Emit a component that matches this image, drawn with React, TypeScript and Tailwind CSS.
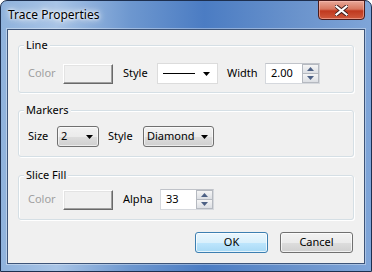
import React from "react";

const font = { fontFamily: '"Segoe UI", "Noto Sans", sans-serif' };

function ColorButton() {
  return (
    <div className="w-[50px] h-[20px] bg-[#f0f0f0] border border-t-[#ffffff] border-l-[#ffffff] border-r-[#696969] border-b-[#696969] shadow-[inset_-1px_-1px_0_#a0a0a0,inset_1px_1px_0_#e3e3e3]" />
  );
}

function Arrow() {
  return (
    <svg width="7" height="4" viewBox="0 0 7 4" className="shrink-0">
      <path d="M0 0 H7 L3.5 4 Z" fill="#000" />
    </svg>
  );
}

function Spin({ value, width }: { value: string; width: string }) {
  return (
    <div className={`${width} h-[21px] bg-white border border-[#d5d8dd] border-t-[#c0c3c9] flex items-stretch`}>
      <div className="flex-1 pl-[5px] flex items-center text-[11px] text-black">{value}</div>
      <div className="w-[17px] flex flex-col bg-[#f0f0f0]">
        <div className="flex-1 flex items-center justify-center border border-[#b5b9c0] bg-[linear-gradient(#f5f5f5,#dcdfe4)]">
          <svg width="7" height="4" viewBox="0 0 7 4"><path d="M0 4 H7 L3.5 0 Z" fill="#4d6185" /></svg>
        </div>
        <div className="flex-1 flex items-center justify-center border border-t-0 border-[#b5b9c0] bg-[linear-gradient(#f5f5f5,#dcdfe4)]">
          <svg width="7" height="4" viewBox="0 0 7 4"><path d="M0 0 H7 L3.5 4 Z" fill="#4d6185" /></svg>
        </div>
      </div>
    </div>
  );
}

function ButtonCombo({ value, width }: { value: string; width: string }) {
  return (
    <div className={`${width} h-[21px] rounded-[3px] border border-[#707070] bg-[linear-gradient(#f2f2f2_0%,#ebebeb_50%,#dddddd_51%,#cfcfcf_100%)] flex items-center justify-between pl-[3px] pr-[5px] text-[11px] text-black shadow-[inset_0_0_0_1px_rgba(255,255,255,0.6)]`}>
      <span>{value}</span>
      <Arrow />
    </div>
  );
}

function Group({ title, height, pt, children }: { title: string; height: string; pt: string; children: React.ReactNode }) {
  return (
    <div className={`relative ${height} ${pt} mx-[10px] border border-[#d5dfe5] rounded-[3px] shadow-[inset_1px_1px_0_#ffffff,1px_1px_0_#ffffff]`}>
      <span className="absolute -top-[9px] left-[5px] px-[2px] bg-[#f0f0f0] text-[11px] leading-[16px] text-black">{title}</span>
      {children}
    </div>
  );
}

export default function App() {
  return (
    <div className="w-[372px] h-[272px] bg-white" style={font}>
      <div className="w-[372px] h-[272px] rounded-t-[7px] border border-[#1d2f4f] bg-[linear-gradient(to_right,#8fb2dc_0%,#a8c4e6_15%,#6d97cf_35%,#4b7cc3_55%,#6a93cc_80%,#7fa5d8_100%)] flex flex-col">
        <div className="h-[28px] flex items-start relative">
          <div className="pl-[7px] pt-[6px] text-[12px] leading-[16px] text-black [text-shadow:0_0_6px_#ffffff,0_0_3px_#ffffff,0_0_8px_#ffffff]">Trace Properties</div>
          <div className="ml-auto mr-[6px] w-[47px] h-[20px] -mt-[1px] rounded-b-[4px] border border-[#4a1c1c] bg-[linear-gradient(#e8a899_0%,#d7775f_45%,#c0391f_55%,#cf5a3e_100%)] flex items-center justify-center shadow-[inset_0_0_0_1px_rgba(255,200,190,0.5)]">
            <svg width="13" height="11" viewBox="0 0 13 11">
              <path d="M1.5 1.5 L11.5 9.5 M11.5 1.5 L1.5 9.5" stroke="#3a1a1a" strokeWidth="4" strokeLinecap="square" />
              <path d="M1.5 1.5 L11.5 9.5 M11.5 1.5 L1.5 9.5" stroke="#ffffff" strokeWidth="2.2" strokeLinecap="square" />
            </svg>
          </div>
        </div>
        <div className="mx-[6px] mb-[7px] flex-1 border border-[#3d5478] shadow-[0_0_0_1px_rgba(255,255,255,0.35)] bg-[#f0f0f0] flex flex-col pt-[15px]">
          <Group title="Line" height="h-[48px]" pt="pt-[17px]">
            <div className="flex items-center h-[21px] text-[11px]">
              <span className="ml-[9px] w-[35px] text-[#a0a0a0]">Color</span>
              <ColorButton />
              <span className="ml-[10px] w-[34px] text-black">Style</span>
              <div className="w-[61px] h-[21px] bg-white border border-[#dcdcdc] flex items-center justify-between pl-[5px] pr-[7px]">
                <div className="w-[32px] h-[1px] bg-black" />
                <Arrow />
              </div>
              <span className="ml-[9px] w-[38px] text-black">Width</span>
              <Spin value="2.00" width="w-[55px]" />
            </div>
          </Group>
          <div className="h-[17px]" />
          <Group title="Markers" height="h-[47px]" pt="pt-[15px]">
            <div className="flex items-center h-[21px] text-[11px]">
              <span className="ml-[9px] w-[29px] text-black">Size</span>
              <ButtonCombo value="2" width="w-[42px]" />
              <span className="ml-[9px] w-[35px] text-black">Style</span>
              <ButtonCombo value="Diamond" width="w-[71px]" />
            </div>
          </Group>
          <div className="h-[18px]" />
          <Group title="Slice Fill" height="h-[45px]" pt="pt-[13px]">
            <div className="flex items-center h-[21px] text-[11px]">
              <span className="ml-[9px] w-[35px] text-[#a0a0a0]">Color</span>
              <ColorButton />
              <span className="ml-[10px] w-[37px] text-black">Alpha</span>
              <Spin value="33" width="w-[54px]" />
            </div>
          </Group>
          <div className="flex justify-end gap-[12px] mr-[11px] mt-[12px]">
            <div className="w-[73px] h-[21px] rounded-[3px] border border-[#3c7fb1] bg-[linear-gradient(#eaf6fd_0%,#d9f0fc_50%,#bee6fd_51%,#a7d9f5_100%)] shadow-[inset_0_0_0_1px_rgba(255,255,255,0.7)] flex items-center justify-center text-[11px] text-black">OK</div>
            <div className="w-[73px] h-[21px] rounded-[3px] border border-[#707070] bg-[linear-gradient(#f2f2f2_0%,#ebebeb_50%,#dddddd_51%,#cfcfcf_100%)] shadow-[inset_0_0_0_1px_rgba(255,255,255,0.7)] flex items-center justify-center text-[11px] text-black">Cancel</div>
          </div>
        </div>
      </div>
    </div>
  );
}
